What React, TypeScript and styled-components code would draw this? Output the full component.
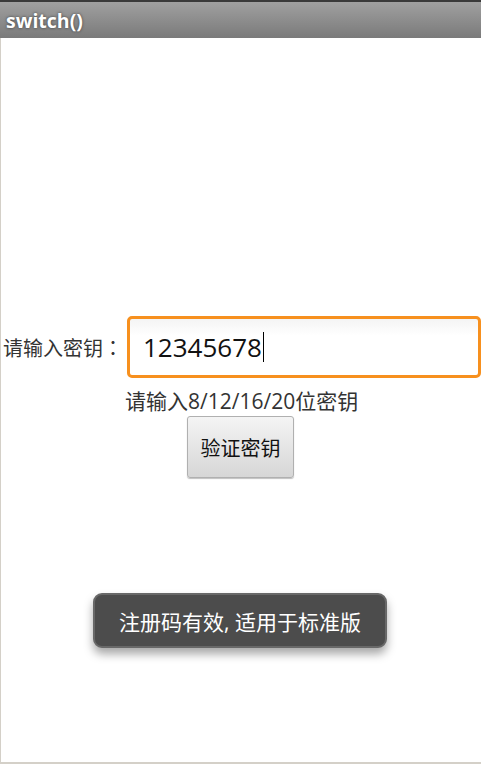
import styled, { createGlobalStyle } from "styled-components";

const GlobalStyle = createGlobalStyle`
  html, body {
    margin: 0;
    padding: 0;
    background: #fff;
  }
  body {
    font-family: "Open Sans", "Noto Sans CJK SC", sans-serif;
  }
`;

const Screen = styled.div`
  position: relative;
  width: 481px;
  height: 764px;
  box-sizing: border-box;
  display: flex;
  flex-direction: column;
  overflow: hidden;
`;

const TitleBar = styled.div`
  height: 38px;
  box-sizing: border-box;
  border-top: 2px solid #3a3a3a;
  background: linear-gradient(#a0a0a0, #7a7a7a);
  display: flex;
  align-items: center;
  padding-left: 6px;
  color: #fff;
  font-family: "Open Sans", sans-serif;
  font-weight: 700;
  font-size: 19.5px;
  text-shadow: 0 0 3px rgba(0, 0, 0, 0.6);
`;

const Content = styled.div`
  flex: 1;
  border-left: 1px solid #d4d0c8;
  border-bottom: 2px solid #d4d0c8;
  display: flex;
  flex-direction: column;
  padding-top: 278px;
`;

const FormRow = styled.div`
  display: flex;
  align-items: center;
`;

const Label = styled.span`
  width: 124px;
  padding-left: 2px;
  font-family: "Noto Sans CJK SC", sans-serif;
  font-size: 20px;
  color: #333;
  white-space: nowrap;
`;

const Colon = styled.span`
  font-family: "Noto Sans CJK TC", sans-serif;
`;

const KeyInput = styled.div`
  flex: 1;
  height: 62px;
  box-sizing: border-box;
  border: 3px solid #f7901e;
  border-radius: 5px;
  background: linear-gradient(#f4f4f4, #fff 30%);
  display: flex;
  align-items: center;
  padding-left: 13px;
  font-size: 26px;
  color: #111;
`;

const Caret = styled.span`
  display: inline-block;
  width: 1px;
  height: 30px;
  background: #000;
  margin-left: 1px;
`;

const Hint = styled.div`
  margin-top: 11px;
  padding-left: 124px;
  font-family: "Open Sans", "Noto Sans CJK SC", sans-serif;
  font-size: 21px;
  color: #333;
  line-height: 24px;
`;

const VerifyButton = styled.button`
  align-self: flex-start;
  margin-left: 186px;
  margin-top: 3px;
  width: 107px;
  height: 62px;
  border: 1px solid #b0b0b0;
  border-radius: 3px;
  background: linear-gradient(#f4f4f4, #d6d6d6);
  box-shadow: 0 1px 1px rgba(0, 0, 0, 0.25);
  font-family: "Noto Sans CJK SC", sans-serif;
  font-size: 20px;
  color: #111;
  padding: 0;
`;

const Toast = styled.div`
  position: absolute;
  left: 93px;
  top: 593px;
  width: 294px;
  height: 55px;
  box-sizing: border-box;
  border: 2px solid #686868;
  border-radius: 9px;
  background: #4c4c4c;
  box-shadow: 0 6px 10px rgba(0, 0, 0, 0.35);
  display: flex;
  align-items: center;
  justify-content: center;
  color: #fff;
  font-family: "Open Sans", "Noto Sans CJK SC", sans-serif;
  font-size: 21px;
`;

export default function App() {
  return (
    <>
      <GlobalStyle />
      <Screen>
        <TitleBar>switch()</TitleBar>
        <Content>
          <FormRow>
            <Label>
              请输入密钥<Colon>：</Colon>
            </Label>
            <KeyInput>
              12345678
              <Caret />
            </KeyInput>
          </FormRow>
          <Hint>请输入8/12/16/20位密钥</Hint>
          <VerifyButton>验证密钥</VerifyButton>
        </Content>
        <Toast>注册码有效, 适用于标准版</Toast>
      </Screen>
    </>
  );
}
